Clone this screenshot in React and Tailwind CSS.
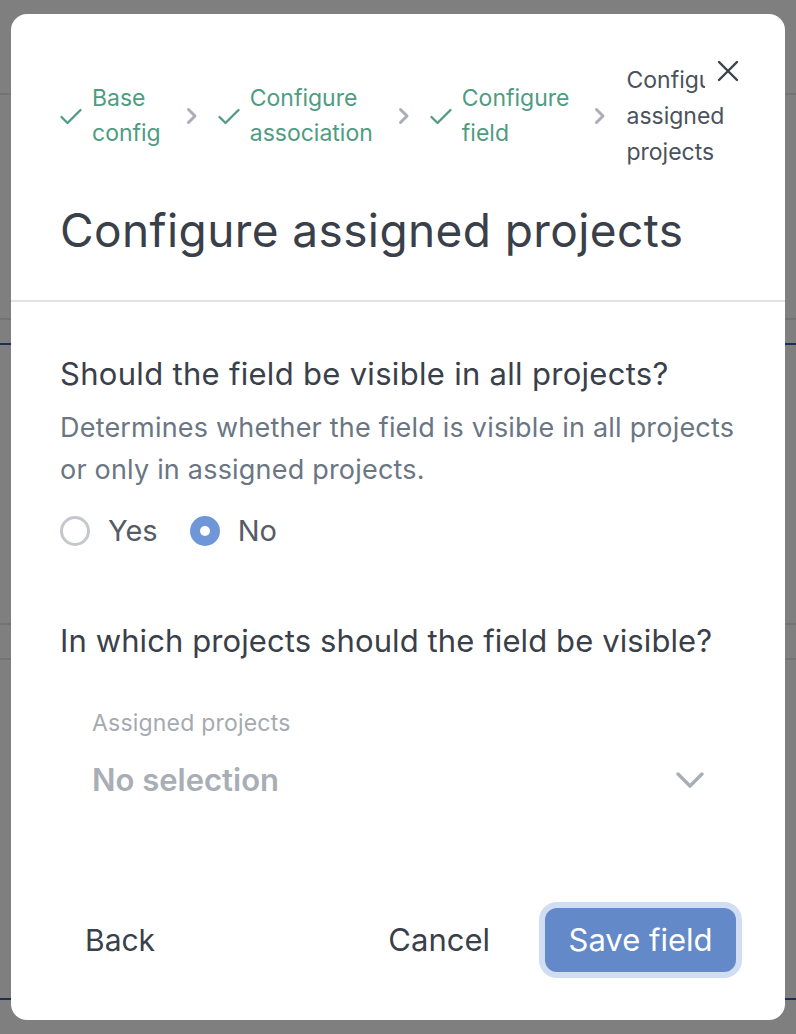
const font = { fontFamily: "Inter, Lato, sans-serif" };

function Check() {
  return (
    <svg width="22" height="17" viewBox="0 0 22 17" fill="none" className="shrink-0">
      <path d="M1.5 9l6 6L20.5 2" stroke="#4f9c82" strokeWidth="2.3" strokeLinecap="round" strokeLinejoin="round" />
    </svg>
  );
}

function Chevron() {
  return (
    <svg width="12" height="18" viewBox="0 0 12 18" fill="none" className="shrink-0 ml-[25px] mr-[20px]">
      <path d="M2.5 2.5L9 9l-6.5 6.5" stroke="#a9aeb6" strokeWidth="3" strokeLinecap="round" strokeLinejoin="round" />
    </svg>
  );
}

function Step({ lines }) {
  return (
    <div className="flex items-center gap-[10px]">
      <Check />
      <div className="text-[23px] leading-[35px] text-[#4f9c82]">
        {lines.map((l) => (
          <div key={l}>{l}</div>
        ))}
      </div>
    </div>
  );
}

function Radio({ checked, label }) {
  return (
    <label className="flex items-center gap-[18px]">
      {checked ? (
        <span className="w-[30px] h-[30px] rounded-full bg-[#6f97d8] flex items-center justify-center">
          <span className="w-[10px] h-[10px] rounded-full bg-white" />
        </span>
      ) : (
        <span className="w-[30px] h-[30px] rounded-full border-[3px] border-[#c4c8ce] bg-white" />
      )}
      <span className="text-[29px] text-[#545c66]">{label}</span>
    </label>
  );
}

export default function App() {
  return (
    <div className="relative min-h-screen bg-white overflow-hidden" style={font}>
      {/* page behind the overlay */}
      <div className="h-[95px] border-b-2 border-gray-200" />
      <div className="h-[225px] border-b-2 border-gray-200" />
      <div className="h-[25px] border-b-2 border-[#3b5ea8]" />
      <div className="h-[280px] border-b-2 border-gray-200" />
      <div className="h-[35px] border-b-2 border-gray-200" />
      <div className="h-[340px] border-b-2 border-[#3b5ea8]" />

      <div className="absolute inset-0 bg-black/50 pt-[14px] pl-[11px]">
        <div className="relative w-[774px] h-[1006px] bg-white rounded-[16px] flex flex-col">
          <div className="px-[49px] pt-[48px] pb-[46px]">
            <div className="flex items-center">
              <Step lines={["Base", "config"]} />
              <Chevron />
              <Step lines={["Configure", "association"]} />
              <Chevron />
              <Step lines={["Configure", "field"]} />
              <Chevron />
              <div className="w-[110px] overflow-hidden whitespace-nowrap text-[23px] leading-[36px] text-[#4a525c]">
                <div>Configure</div>
                <div>assigned</div>
                <div>projects</div>
              </div>
            </div>
            <h1 className="mt-[36px] text-[46px] leading-[48px] tracking-[0.4px] text-[#3a4049]">
              Configure assigned projects
            </h1>
          </div>

          <button className="absolute right-[40px] top-[40px] p-[6px] pl-[12px] bg-white">
            <svg width="22" height="22" viewBox="0 0 22 22" fill="none">
              <path d="M2 2L20 20M20 2L2 20" stroke="#3a4049" strokeWidth="2.4" strokeLinecap="round" />
            </svg>
          </button>

          <div className="border-t-2 border-[#dfe3e8] px-[49px] pt-[54px] flex-1 flex flex-col">
            <h2 className="text-[31px] leading-[36px] tracking-[0.3px] text-[#3a4049]">
              Should the field be visible in all projects?
            </h2>
            <p className="mt-[15px] text-[27px] leading-[42px] tracking-[0.2px] text-[#6b7683]">
              Determines whether the field is visible in all projects
              <br />
              or only in assigned projects.
            </p>
            <div className="mt-[18px] flex items-center gap-[32px]">
              <Radio label="Yes" />
              <Radio checked label="No" />
            </div>

            <h2 className="mt-[70px] text-[31px] leading-[36px] tracking-[0.1px] text-[#3a4049]">
              In which projects should the field be visible?
            </h2>

            <div className="mt-[51px] px-[32px] flex items-end justify-between">
              <div>
                <div className="text-[23px] leading-[26px] tracking-[0.2px] text-[#a4aab2]">Assigned projects</div>
                <div className="mt-[26px] text-[31px] leading-[36px] font-semibold text-[#a9aeb6]">
                  No selection
                </div>
              </div>
              <svg width="30" height="18" viewBox="0 0 30 18" fill="none" className="mb-[9px] mr-[-1px]">
                <path d="M3 3l12 12L27 3" stroke="#a9aeb6" strokeWidth="3.5" strokeLinecap="round" strokeLinejoin="round" />
              </svg>
            </div>

            <div className="mt-auto mb-[48px] flex items-center">
              <button className="px-[25px] text-[30px] text-[#3a4049]">Back</button>
              <div className="ml-auto flex items-center gap-[30px]">
                <button className="px-[25px] text-[31px] text-[#3a4049]">Cancel</button>
                <button className="w-[191px] h-[64px] rounded-[12px] bg-[#6389c9] text-white text-[31px] ring-[6px] ring-[#d1ddf3]">
                  Save field
                </button>
              </div>
            </div>
          </div>
        </div>
      </div>
    </div>
  );
}
